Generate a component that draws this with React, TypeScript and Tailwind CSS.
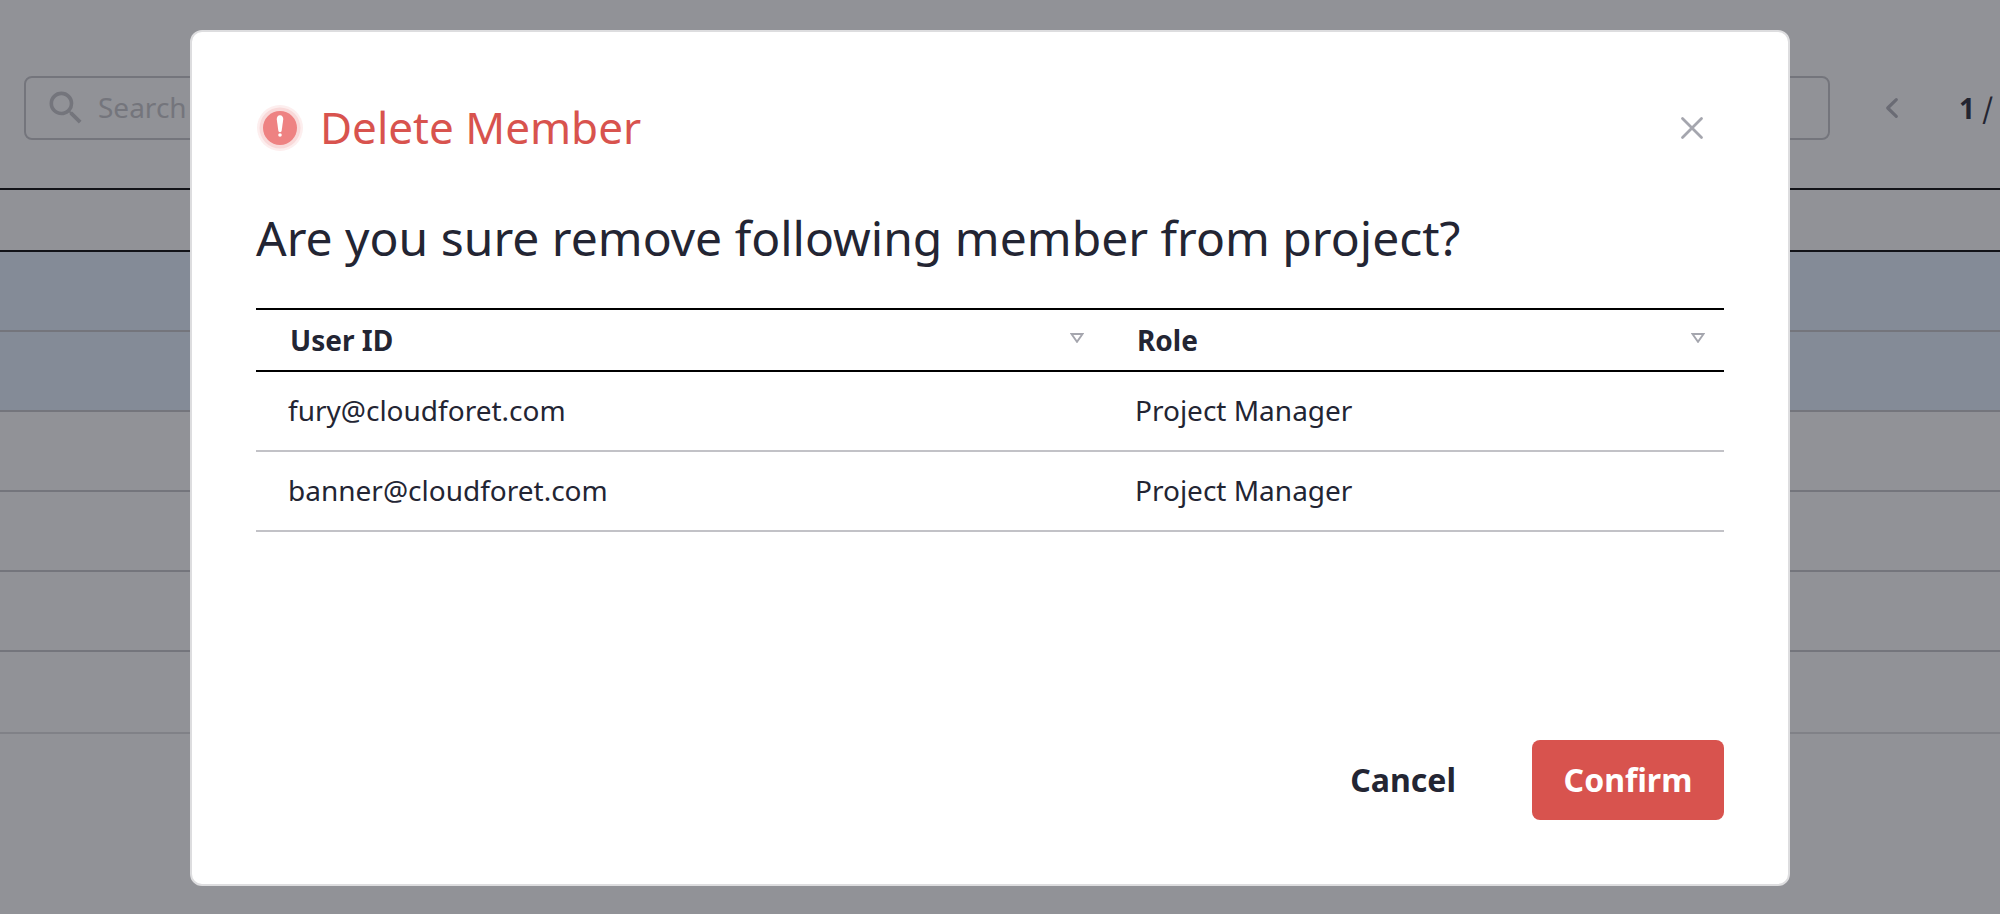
import React, { useState } from "react";

const members = [
  { id: "fury@cloudforet.com", role: "Project Manager" },
  { id: "banner@cloudforet.com", role: "Project Manager" },
];

const listRows = [
  "h-20 border-[#c5c5c9] bg-[#e5f0ff]",
  "h-20 border-[#c5c5c9] bg-[#e5f0ff]",
  "h-20 border-[#c5c5c9]",
  "h-20 border-[#c5c5c9]",
  "h-20 border-[#c5c5c9]",
  "h-[82px] border-[#dddddf]",
];

function SortIcon() {
  return (
    <svg className="mb-1 h-2.5 w-3.5 shrink-0" viewBox="0 0 14 10" fill="none" aria-hidden="true">
      <path d="M1.500 1H12.500L7 8.800Z" stroke="#a5a6ae" strokeWidth="1.900" />
    </svg>
  );
}

function AlertIcon() {
  return (
    <svg className="h-12 w-12 shrink-0" viewBox="0 0 48 48" aria-hidden="true">
      <circle cx="24" cy="24" r="23" fill="#fdeeee" />
      <circle cx="24" cy="24" r="20.500" fill="#f9d9d9" />
      <circle cx="24" cy="24" r="17" fill="#ee8282" />
      <path d="M24 11.300c2.100 0 3.400 1.800 3.200 4.200l-1.500 11.100c-.15 1-.8 1.600-1.700 1.600s-1.550-.6-1.700-1.600l-1.500-11.100C20.600 13.100 21.900 11.300 24 11.300Z" fill="#fff" />
      <circle cx="24" cy="31" r="1.800" fill="#fff" />
    </svg>
  );
}

function ProjectMembers() {
  return (
    <main className="pt-[76px]">
      <div className="flex items-center pl-6 text-[28px] leading-10">
        <label className="flex h-16 grow items-center gap-2.5 rounded-lg border-2 border-[#c5c5c9] pl-[18px]">
          <svg className="h-11 w-11 shrink-0" viewBox="0 0 24 24" aria-hidden="true">
            <path
              fill="#c5c5c9"
              d="M15.500 14h-.79l-.28-.27A6.471 6.471 0 0 0 16 9.500 6.500 6.500 0 1 0 9.500 16c1.610 0 3.090-.59 4.230-1.570l.27.28v.79l5 4.990L20.490 19l-4.990-5zm-6 0C7.010 14 5 11.990 5 9.500S7.010 5 9.500 5 14 7.010 14 9.500 11.990 14 9.500 14z"
            />
          </svg>
          <input
            type="search"
            aria-label="Search members"
            placeholder="Search"
            className="min-w-0 grow bg-transparent pb-0.5 outline-none placeholder:text-[#c5c5c9]"
          />
        </label>
        <div className="flex w-[170px] shrink-0 items-center overflow-hidden pl-[54px] whitespace-nowrap">
          <button type="button" aria-label="Previous page" className="w-[75px] shrink-0">
            <svg className="h-6 w-4" viewBox="0 0 16 24" fill="none" aria-hidden="true">
              <path d="M12.300 3.600L3.700 12L12.300 20.400" stroke="#b0b1b9" strokeWidth="3.200" strokeLinecap="round" strokeLinejoin="round" />
            </svg>
          </button>
          <span className="pb-0.5">
            <b>1</b> <span className="font-['Noto_Sans_CJK_KR',sans-serif] font-medium">/</span>
          </span>
        </div>
      </div>
      <div className="mt-12 h-16 border-y-2 border-black" />
      <ul>
        {listRows.map((row, i) => (
          <li key={i} className={`border-b-2 ${row}`} />
        ))}
      </ul>
    </main>
  );
}

export default function App() {
  const [open, setOpen] = useState(true);
  const close = () => setOpen(false);

  return (
    <div className="relative min-h-screen overflow-hidden bg-white font-['Noto_Sans',sans-serif] text-[#232533]">
      <ProjectMembers />
      {open && (
        <div className="absolute inset-0 flex items-start justify-center bg-[#24262f]/50 pt-[30px] pr-5">
          <div
            role="dialog"
            aria-modal="true"
            aria-labelledby="dialog-title"
            className="w-full max-w-[1600px] rounded-xl border-2 border-[#dddddf] bg-white p-16"
          >
            <header className="flex h-16 items-center gap-4">
              <AlertIcon />
              <h1 id="dialog-title" className="grow pb-0.5 text-[44px] leading-[64px] text-[#d8534e]">Delete Member</h1>
              <button type="button" aria-label="Close" onClick={close} className="flex h-16 w-16 items-center justify-center">
                <svg className="h-6 w-6" viewBox="0 0 24 24" fill="none" aria-hidden="true">
                  <path d="M2.500 2.500L21.500 21.500M21.500 2.500L2.500 21.500" stroke="#a5a6ae" strokeWidth="2.800" strokeLinecap="round" />
                </svg>
              </button>
            </header>
            <p className="mt-11 text-[48px] leading-[68px]">Are you sure remove following member from project?</p>
            <table className="mt-9 w-full table-fixed border-separate border-spacing-0 text-left text-[28px] leading-10">
              <thead>
                <tr>
                  <th className="h-16 w-[847px] border-y-2 border-black pr-[19px] pl-[34px]">
                    <div className="flex items-center justify-between">User ID<SortIcon /></div>
                  </th>
                  <th className="h-16 border-y-2 border-black pr-[19px] pl-[34px]">
                    <div className="flex items-center justify-between">Role<SortIcon /></div>
                  </th>
                </tr>
              </thead>
              <tbody>
                {members.map((m) => (
                  <tr key={m.id}>
                    <td className="h-20 border-b-2 border-[#c2c2c7] pb-0.5 pl-8">{m.id}</td>
                    <td className="h-20 border-b-2 border-[#c2c2c7] pb-0.5 pl-8">{m.role}</td>
                  </tr>
                ))}
              </tbody>
            </table>
            <footer className="mt-[208px] flex justify-end gap-11 text-[32px] leading-[48px] font-bold">
              <button type="button" onClick={close} className="h-20 px-8">Cancel</button>
              <button type="button" onClick={close} className="h-20 w-48 rounded-lg bg-[#d8534e] text-white">Confirm</button>
            </footer>
          </div>
        </div>
      )}
    </div>
  );
}
